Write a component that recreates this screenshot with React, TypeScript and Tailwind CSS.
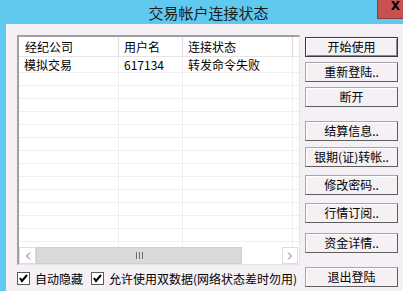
import { ReactNode } from "react";

const FONT = { fontFamily: '"Noto Sans CJK SC", "Liberation Sans", sans-serif' };

interface IWinButtonProps {
  children: ReactNode;
  top: string;
  isDefault?: boolean;
}

const WinButton = (props: IWinButtonProps) => (
  <div
    className={`${props.top} h-[20px] w-[93px] flex items-center justify-center bg-[#f4f0f4] text-[12px] leading-none text-black border ${
      props.isDefault
        ? "border-[#3c3c3c] shadow-[inset_1px_1px_0_#ffffff,inset_-1px_-1px_0_#8a8a8a]"
        : "border-t-[#a8a4a8] border-l-[#a8a4a8] border-b-[#5e5e5e] border-r-[#5e5e5e] shadow-[inset_1px_1px_0_#ffffff]"
    }`}
  >
    {props.children}
  </div>
);

const CheckBox = () => (
  <div className="w-[13px] h-[13px] border border-[#5a5a5a] bg-white flex items-center justify-center">
    <svg width="9" height="9" viewBox="0 0 9 9">
      <polyline points="1,4 3,7 8,1" fill="none" stroke="#000" strokeWidth="2" />
    </svg>
  </div>
);

const rows = Array.from({ length: 14 });

export default function App() {
  return (
    <div
      className="w-[403px] h-[291px] overflow-hidden bg-[#5fc9ef] flex flex-col relative"
      style={FONT}
    >
      {/* title bar */}
      <div className="h-[24px] shrink-0 pl-[14px] flex items-center justify-center text-[15px] text-[#1b1b1b] leading-none">
        交易帐户连接状态
      </div>
      <div className="absolute top-0 left-[377px] w-[30px] h-[19px] bg-[#c75050] border-l border-b border-[#8a3b3b] flex justify-center">
        <span
          className="text-[12px] font-bold leading-[12px] text-black ml-[6px]"
          style={{ fontFamily: '"DejaVu Sans", sans-serif' }}
        >
          X
        </span>
      </div>

      {/* dialog body */}
      <div className="ml-[6px] flex-1 bg-[#f5f0f5] pl-[11px] pt-[11px] flex gap-[5px]">
        <div className="flex flex-col">
          {/* list view */}
          <div className="w-[283px] h-[230px] border-l-2 border-t-2 border-[#a29ea2] border-r border-b border-r-[#e6e2e6] border-b-[#e6e2e6] bg-white flex flex-col overflow-hidden">
            <div className="h-[20px] shrink-0 flex text-[12px] leading-none border-b border-[#e5e5e5]">
              <div className="w-[100px] pl-[6px] flex items-center border-r border-[#dcdcdc]">经纪公司</div>
              <div className="w-[64px] pl-[5px] flex items-center border-r border-[#dcdcdc]">用户名</div>
              <div className="w-[110px] pl-[5px] flex items-center border-r border-[#dcdcdc]">连接状态</div>
              <div className="flex-1" />
            </div>
            <div className="flex-1 overflow-hidden">
              <div className="h-[16px] flex text-[12px] leading-[16px] border-b border-[#f1eef1]">
                <div className="w-[100px] pl-[5px] whitespace-nowrap border-r border-[#f1eef1]">模拟交易</div>
                <div className="w-[64px] pl-[5px] whitespace-nowrap border-r border-[#f1eef1]">617134</div>
                <div className="w-[110px] pl-[5px] whitespace-nowrap border-r border-[#f1eef1]">转发命令失败</div>
                <div className="flex-1" />
              </div>
              {rows.map((_, i) => (
                <div key={i} className="h-[13px] flex border-b border-[#f1eef1]">
                  <div className="w-[100px] border-r border-[#f1eef1]" />
                  <div className="w-[64px] border-r border-[#f1eef1]" />
                  <div className="w-[110px] border-r border-[#f1eef1]" />
                  <div className="flex-1" />
                </div>
              ))}
            </div>
            {/* horizontal scrollbar */}
            <div className="h-[17px] shrink-0 flex bg-white">
              <div className="w-[17px] border border-[#dcdcdc] flex items-center justify-center">
                <svg width="6" height="8" viewBox="0 0 6 8">
                  <polyline points="5,0.5 1.5,4 5,7.5" fill="none" stroke="#6d6d6d" strokeWidth="1" />
                </svg>
              </div>
              <div className="w-[206px] bg-[#dadada] border border-[#cfcfcf] flex items-center justify-center gap-[2px]">
                <div className="w-px h-[7px] bg-[#6d6d6d]" />
                <div className="w-px h-[7px] bg-[#6d6d6d]" />
                <div className="w-px h-[7px] bg-[#6d6d6d]" />
              </div>
              <div className="w-[40px]" />
              <div className="w-[16px] border border-[#dcdcdc] flex items-center justify-center">
                <svg width="6" height="8" viewBox="0 0 6 8">
                  <polyline points="1,0.5 4.5,4 1,7.5" fill="none" stroke="#6d6d6d" strokeWidth="1" />
                </svg>
              </div>
            </div>
          </div>

          {/* options */}
          <div className="mt-[7px] flex items-center text-[12px] leading-none text-black">
            <CheckBox />
            <span className="ml-[5px]">自动隐藏</span>
            <div className="ml-[8px]">
              <CheckBox />
            </div>
            <span className="ml-[5px] whitespace-nowrap">允许使用双数据(网络状态差时勿用)</span>
          </div>
        </div>

        {/* buttons */}
        <div className="flex flex-col pt-[2px]">
          <WinButton top="mt-0" isDefault>开始使用</WinButton>
          <WinButton top="mt-[5px]">重新登陆..</WinButton>
          <WinButton top="mt-[5px]">断开</WinButton>
          <WinButton top="mt-[14px]">结算信息..</WinButton>
          <WinButton top="mt-[6px]">银期(证)转帐..</WinButton>
          <WinButton top="mt-[8px]">修改密码..</WinButton>
          <WinButton top="mt-[8px]">行情订阅..</WinButton>
          <WinButton top="mt-[10px]">资金详情..</WinButton>
          <WinButton top="mt-[14px]">退出登陆</WinButton>
        </div>
      </div>
    </div>
  );
}
